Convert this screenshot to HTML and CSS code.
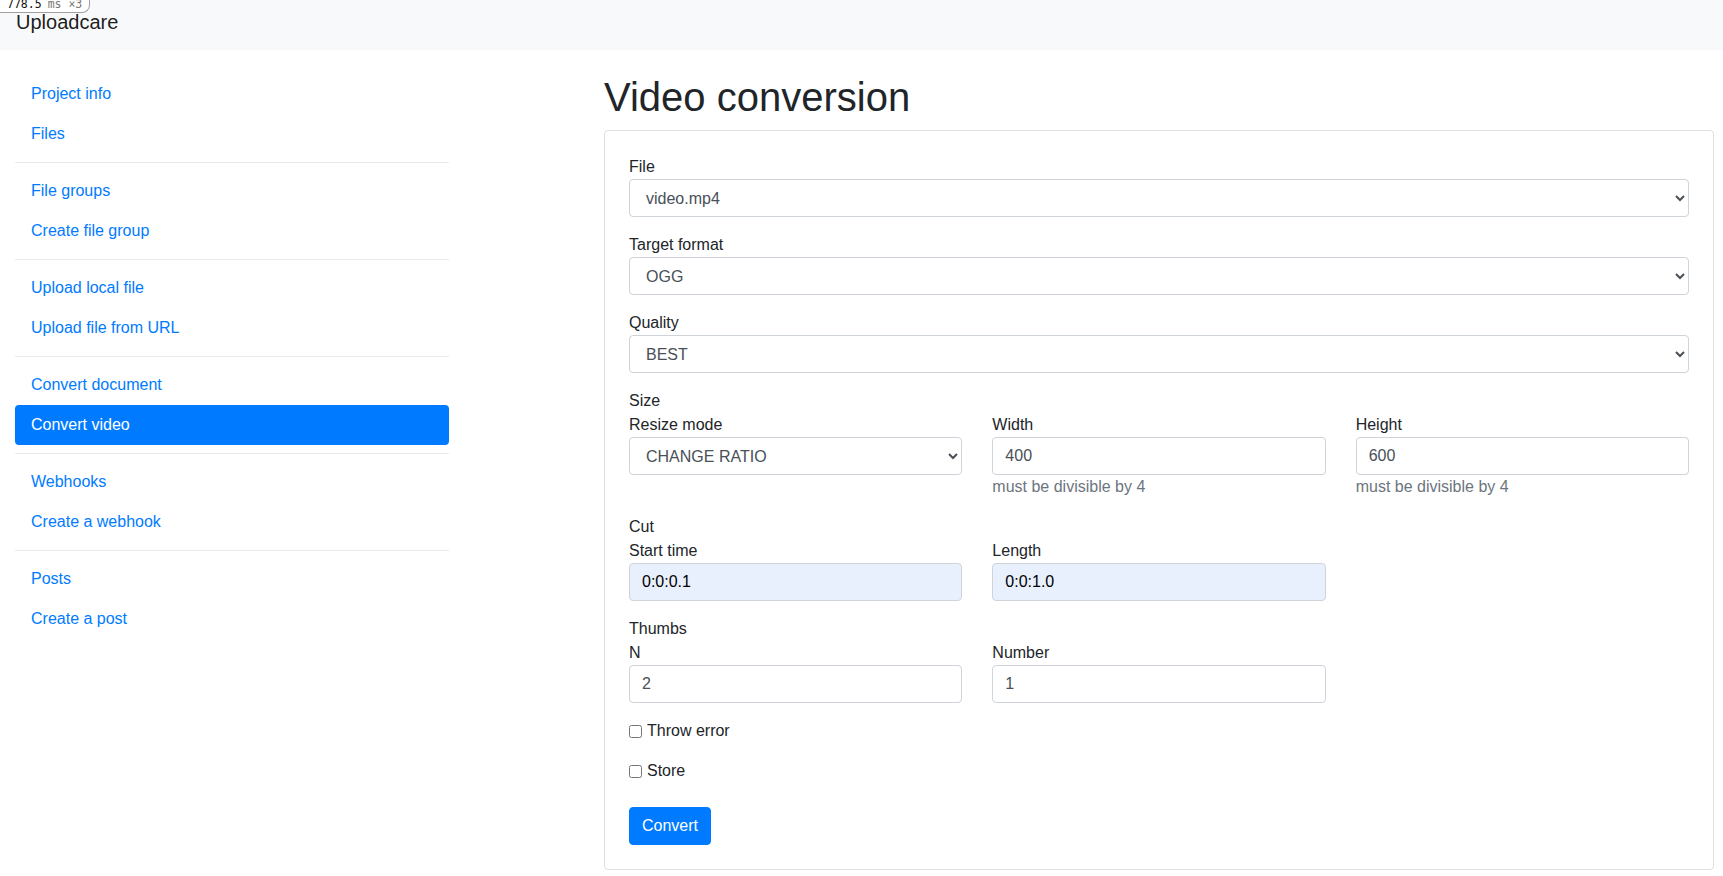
FILE: index.html
```html
<!DOCTYPE html>
<html lang="en">
<head>
<meta charset="utf-8">
<title>Video conversion</title>
<link rel="stylesheet" href="styles.css">
</head>
<body>
<div class="debug-badge"><span class="debug-val">778.5</span><span class="debug-unit">ms ×3</span></div>
<nav class="navbar"><a class="brand" href="#">Uploadcare</a></nav>
<div class="layout">
  <aside class="sidebar">
    <a class="nav-link" href="#">Project info</a>
    <a class="nav-link" href="#">Files</a>
    <div class="divider"></div>
    <a class="nav-link" href="#">File groups</a>
    <a class="nav-link" href="#">Create file group</a>
    <div class="divider"></div>
    <a class="nav-link" href="#">Upload local file</a>
    <a class="nav-link" href="#">Upload file from URL</a>
    <div class="divider"></div>
    <a class="nav-link" href="#">Convert document</a>
    <a class="nav-link active" href="#">Convert video</a>
    <div class="divider"></div>
    <a class="nav-link" href="#">Webhooks</a>
    <a class="nav-link" href="#">Create a webhook</a>
    <div class="divider"></div>
    <a class="nav-link" href="#">Posts</a>
    <a class="nav-link" href="#">Create a post</a>
  </aside>
  <main class="main">
    <h1 class="title">Video conversion</h1>
    <div class="card">
      <form class="form">
        <div class="group">
          <label class="label">File</label>
          <select class="control select"><option>video.mp4</option></select>
        </div>
        <div class="group">
          <label class="label">Target format</label>
          <select class="control select"><option>OGG</option></select>
        </div>
        <div class="group">
          <label class="label">Quality</label>
          <select class="control select"><option>BEST</option></select>
        </div>
        <div class="group">
          <div class="label">Size</div>
          <div class="cols">
            <div class="col">
              <label class="label">Resize mode</label>
              <select class="control select"><option>CHANGE RATIO</option></select>
            </div>
            <div class="col">
              <label class="label">Width</label>
              <input class="control" type="text" value="400">
              <div class="help">must be divisible by 4</div>
            </div>
            <div class="col">
              <label class="label">Height</label>
              <input class="control" type="text" value="600">
              <div class="help">must be divisible by 4</div>
            </div>
          </div>
        </div>
        <div class="group">
          <div class="label">Cut</div>
          <div class="cols">
            <div class="col">
              <label class="label">Start time</label>
              <input class="control autofilled" type="text" value="0:0:0.1">
            </div>
            <div class="col">
              <label class="label">Length</label>
              <input class="control autofilled" type="text" value="0:0:1.0">
            </div>
          </div>
        </div>
        <div class="group">
          <div class="label">Thumbs</div>
          <div class="cols">
            <div class="col">
              <label class="label">N</label>
              <input class="control" type="text" value="2">
            </div>
            <div class="col">
              <label class="label">Number</label>
              <input class="control" type="text" value="1">
            </div>
          </div>
        </div>
        <div class="group">
          <label class="check"><input class="check-box" type="checkbox">Throw error</label>
        </div>
        <div class="group group-last">
          <label class="check"><input class="check-box" type="checkbox">Store</label>
        </div>
        <button class="btn" type="button">Convert</button>
      </form>
    </div>
  </main>
</div>
</body>
</html>
```

FILE: styles.css
```css
* { box-sizing: border-box; }

html, body {
  margin: 0;
  padding: 0;
}

body {
  font-family: "Liberation Sans", Arial, sans-serif;
  font-size: 16px;
  line-height: 1.5;
  color: #212529;
  background: #fff;
  position: relative;
}

.debug-badge {
  position: absolute;
  top: -4px;
  left: 0;
  height: 17px;
  padding: 0 7px;
  background: #fff;
  border: 1px solid #a0a0a0;
  border-left: none;
  border-radius: 0 0 8px 0;
  font-family: "DejaVu Sans Mono", "Liberation Mono", monospace;
  font-size: 11.5px;
  line-height: 15px;
  white-space: nowrap;
  z-index: 10;
}

.debug-val { color: #111; margin-right: 6px; }
.debug-unit { color: #777; }

.navbar {
  height: 50px;
  background: #f8f9fa;
  padding: 7px 16px 0;
}

.brand {
  display: inline-block;
  font-size: 20px;
  line-height: 30px;
  color: rgba(0, 0, 0, 0.9);
  text-decoration: none;
}

.layout {
  display: grid;
  grid-template-columns: 434px 1110px;
  column-gap: 155px;
  padding: 24px 0 0 15px;
}

.sidebar {
  display: flex;
  flex-direction: column;
}

.nav-link {
  display: block;
  padding: 8px 16px;
  line-height: 24px;
  color: #007bff;
  text-decoration: none;
  border-radius: 4px;
}

.nav-link.active {
  background: #007bff;
  color: #fff;
}

.divider {
  height: 0;
  margin: 8px 0;
  border-top: 1px solid #e9ecef;
}

.title {
  font-size: 40px;
  font-weight: 500;
  line-height: 1.2;
  margin: -1px 0 9px;
  color: #212529;
}

.card {
  border: 1px solid rgba(0, 0, 0, 0.125);
  border-radius: 4px;
  padding: 24px;
}

.form { margin: 0; }

.group { margin-bottom: 16px; }
.group-last { margin-bottom: 24px; }

.label {
  display: block;
  line-height: 24px;
  margin: 0;
}

.control {
  display: block;
  width: 100%;
  height: 38px;
  padding: 6px 12px;
  font-family: inherit;
  font-size: 16px;
  line-height: 24px;
  color: #495057;
  background: #fff;
  border: 1px solid #ced4da;
  border-radius: 4px;
  margin: 0;
}

.autofilled {
  background: #e8f0fe;
  color: #000;
}

.cols {
  display: grid;
  grid-template-columns: 1fr 1fr 1fr;
  column-gap: 30px;
}

.help {
  line-height: 24px;
  color: #6c757d;
}

.check {
  display: flex;
  align-items: center;
  line-height: 24px;
}

.check-box {
  width: 13px;
  height: 13px;
  margin: 0 5px 0 0;
}

.btn {
  display: inline-block;
  font-family: inherit;
  font-size: 16px;
  line-height: 24px;
  padding: 6px 12px;
  color: #fff;
  background: #007bff;
  border: 1px solid #007bff;
  border-radius: 4px;
}
```
